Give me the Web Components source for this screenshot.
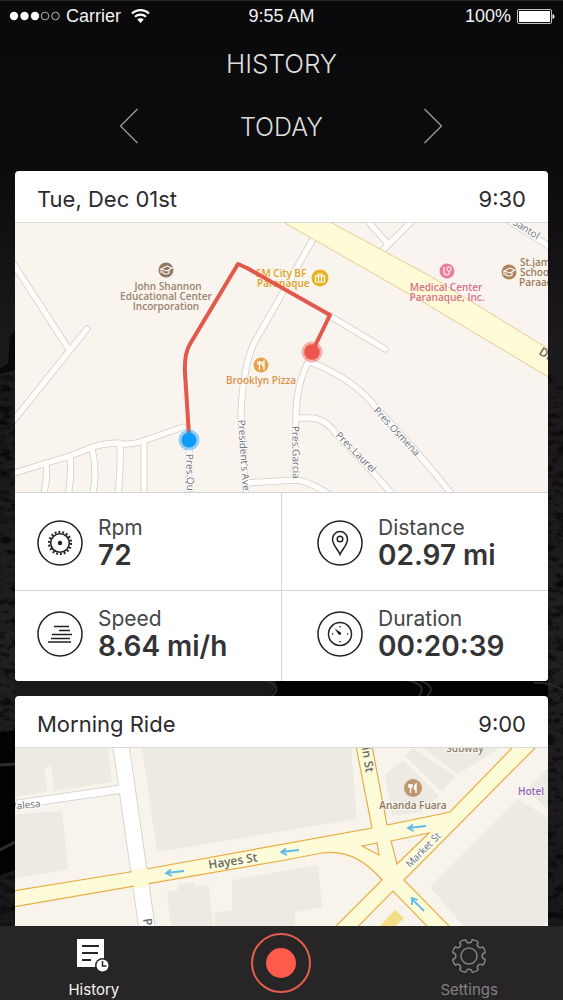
<!DOCTYPE html>
<html lang="en">
<head>
<meta charset="utf-8">
<meta name="viewport" content="width=device-width, initial-scale=1">
<title>History</title>
<style>
html, body{
    height: 100%;
    margin: 0;
}

body{
    background: #0b0a0c;
    font-family: Inter, "Liberation Sans", sans-serif;
    color: #2b2b2d;
}
</style>
</head>
<body>
<ride-app>
    <status-bar slot="top" data-carrier="Carrier" data-time="9:55 AM" data-battery="100%"></status-bar>
    <day-picker slot="top" data-title="History" data-day="Today"></day-picker>

    <ride-card data-name="Tue, Dec 01st" data-time="9:30">
        <paranaque-map slot="map"></paranaque-map>
        <ride-stat data-label="Rpm" data-value="72" data-icon="gear"></ride-stat>
        <ride-stat data-label="Distance" data-value="02.97 mi" data-icon="pin"></ride-stat>
        <ride-stat data-label="Speed" data-value="8.64 mi/h" data-icon="speed"></ride-stat>
        <ride-stat data-label="Duration" data-value="00:20:39" data-icon="clock"></ride-stat>
    </ride-card>

    <ride-card data-name="Morning Ride" data-time="9:00">
        <hayes-map slot="map"></hayes-map>
    </ride-card>

    <tab-bar slot="bottom"></tab-bar>
</ride-app>

<script>
function makeTemplate(html){
    const template = document.createElement("template");
    template.innerHTML = html;
    return template;
}

// shared by every element: clones its template into an open shadow root
class RideElement extends HTMLElement{
    constructor(){
        super();
        this.attachShadow({mode: "open"});
        this.shadowRoot.appendChild(this.constructor.template.content.cloneNode(true));
    }

    connectedCallback(){
        this.render();
    }

    find(selector){
        return this.shadowRoot.querySelector(selector);
    }

    render(){}
}

/* ---------- page ---------- */
class RideApp extends RideElement{
    static template = makeTemplate(`
<style>
:host{
    display: flex;
    flex-direction: column;
    height: 100vh;
    position: relative;
    overflow: hidden;
    background: #0b0a0c;
}

.backdrop{
    position: absolute;
    inset: 0;
    width: 100%;
    height: 100%;
}

header, main, footer{
    position: relative;
}

main{
    flex: 1;
    min-height: 0;
    overflow-y: auto;
    scrollbar-width: none;
    display: flex;
    flex-direction: column;
    gap: 15px;
    padding: 0 15px;
}

::slotted(ride-card){
    flex: none;
}
</style>

<svg class="backdrop" viewBox="0 0 563 1000" preserveAspectRatio="xMidYMid slice" aria-hidden="true">
    <defs>
        <linearGradient id="sky" x1="0" y1="0" x2="0" y2="1">
            <stop offset="0" stop-color="#0a090b"/>
            <stop offset=".17" stop-color="#0c0b0d"/>
            <stop offset=".36" stop-color="#1b1b1e"/>
            <stop offset=".45" stop-color="#1a1a1c"/>
            <stop offset=".65" stop-color="#202022"/>
            <stop offset="1" stop-color="#161617"/>
        </linearGradient>
        <filter id="rock" x="0" y="0" width="1" height="1">
            <feTurbulence type="fractalNoise" baseFrequency=".09 .16" numOctaves="4" seed="6"/>
            <feColorMatrix values="0 0 0 0 0  0 0 0 0 0  0 0 0 0 0  4 0 0 0 -1.9"/>
        </filter>
    </defs>
    <rect width="563" height="1000" fill="url(#sky)"/>
    <path d="M0 368l8-4 2-28 5-6v40L0 374z" fill="#09090a"/>
    <rect y="375" width="563" height="625" filter="url(#rock)" opacity=".6"/>
    <path d="M0 733l15-3V670h533v40l-15 10 15 10v100l-533 40-15 5z" fill="#020203"/>
    <path d="M15 676h258q8 10-6 24H15z" fill="#19191b"/>
    <path d="M0 765l15-1M0 850l15-8" stroke="#2c2c2e" stroke-width="3"/>
    <path d="M264 680q20 6 8 16M405 680q24 4 14 16M418 680q20 6 9 16M534 683q12-2 29 7" fill="none" stroke="#29292c" stroke-width="2"/>
</svg>
<header><slot name="top"></slot></header>
<main><slot></slot></main>
<footer><slot name="bottom"></slot></footer>
`);
}

/* ---------- phone status ---------- */
class StatusBar extends RideElement{
    static template = makeTemplate(`
<style>
:host{
    display: grid;
    grid-template-columns: 1fr auto 1fr;
    align-items: center;
    height: 31px;
    padding: 0 8px;
    border-top: 1px solid #29292b;
    box-sizing: border-box;
    font: 18px/20px "Liberation Sans", Arial, sans-serif;
    color: #f2f2f3;
}

div{
    display: flex;
    align-items: center;
    gap: 6px;
}

.right{
    justify-content: flex-end;
}

.carrier{
    margin-right: 4px;
}

svg{
    display: block;
}
</style>

<div>
    <svg width="52" height="10" viewBox="0 0 52 10" aria-hidden="true">
        <g fill="#fff"><circle cx="6" cy="5" r="4.2"/><circle cx="16.5" cy="5" r="4.2"/><circle cx="27" cy="5" r="4.2"/></g>
        <g fill="none" stroke="#b5b5b7"><circle cx="37" cy="5" r="3.8"/><circle cx="47.5" cy="5" r="3.8"/></g>
    </svg>
    <span class="carrier"></span>
    <svg width="19" height="14" viewBox="0 0 19 14" aria-hidden="true">
        <path d="M1 4.6a12.2 12.2 0 0 1 17 0M4 7.8a8 8 0 0 1 11 0" fill="none" stroke="#fff" stroke-width="2.1"/>
        <path d="M9.5 14L6.3 10.6a4.6 4.6 0 0 1 6.4 0z" fill="#fff"/>
    </svg>
</div>
<span class="time"></span>
<div class="right">
    <span class="battery"></span>
    <svg width="38" height="15" viewBox="0 0 38 15" aria-hidden="true">
        <rect x=".5" y=".5" width="34" height="14" rx="1.5" fill="none" stroke="#c4c4c6"/>
        <rect x="2" y="2" width="31" height="11" fill="#fff"/>
        <path d="M35.5 5q2 .5 2 2.5t-2 2.5z" fill="#fff"/>
    </svg>
</div>
`);

    render(){
        this.find(".carrier").textContent = this.dataset.carrier;
        this.find(".time").textContent = this.dataset.time;
        this.find(".battery").textContent = this.dataset.battery;
    }
}

/* ---------- title and day switch ---------- */
class DayPicker extends RideElement{
    static template = makeTemplate(`
<style>
:host{
    display: block;
    padding: 17px 0 25px;
    color: #dededf;
    text-align: center;
    text-transform: uppercase;
}

h1, h2{
    margin: 0;
    font-weight: 300;
    line-height: 32px;
}

h1{
    font-size: 26px;
}

h2{
    font-size: 25px;
    padding-top: 2px;
}

div{
    display: grid;
    grid-template-columns: 1fr 1fr 1fr;
    align-items: center;
    width: 81%;
    margin: 26px auto 0;
}

button{
    display: block;
    justify-self: center;
    padding: 2px 12px;
    border: 0;
    background: none;
    color: #9b9b9d;
}

svg{
    display: block;
}
</style>

<h1></h1>
<div>
    <button type="button" aria-label="Previous day">
        <svg width="20" height="36" viewBox="0 0 20 36" fill="none" stroke="currentColor" stroke-width="1.3"><path d="M18.5 1L1.5 18l17 17"/></svg>
    </button>
    <h2></h2>
    <button type="button" aria-label="Next day">
        <svg width="20" height="36" viewBox="0 0 20 36" fill="none" stroke="currentColor" stroke-width="1.3"><path d="M1.5 1l17 17-17 17"/></svg>
    </button>
</div>
`);

    render(){
        this.find("h1").textContent = this.dataset.title;
        this.find("h2").textContent = this.dataset.day;
    }
}

/* ---------- ride card ---------- */
class RideCard extends RideElement{
    static template = makeTemplate(`
<style>
:host{
    display: block;
    overflow: hidden;
    border-radius: 4px;
    background: #fff;
}

header{
    display: flex;
    justify-content: space-between;
    align-items: center;
    height: 51px;
    padding: 4px 22px 0;
    box-sizing: border-box;
    font-size: 22px;
    line-height: 28px;
}

h3{
    margin: 0;
    font: inherit;
}

.map{
    border-top: 1px solid #dcdad8;
}

.stats{
    display: grid;
    grid-template-columns: 1fr 1fr;
    gap: 1px;
    background: #d6d4d6;
}

.stats:not(.empty){
    border-top: 1px solid #d6d4d6;
}

::slotted(ride-stat){
    padding: 16px 0 20px 22px;
}

::slotted(ride-stat:nth-of-type(-n+2)){
    padding-top: 23px;
}

::slotted(ride-stat:nth-of-type(even)){
    padding-left: 35px;
}
</style>

<header><h3></h3><time></time></header>
<div class="map"><slot name="map"></slot></div>
<div class="stats"><slot></slot></div>
`);

    render(){
        this.find("h3").textContent = this.dataset.name;
        this.find("time").textContent = this.dataset.time;
        this.find(".stats").classList.toggle("empty", !this.querySelector("ride-stat"));
    }
}

/* ---------- one number of a ride ---------- */
const statIcons = {
    gear: `
        <circle cx="23" cy="23" r="9.3" stroke-width="1.6"/>
        <circle cx="23" cy="23" r="11" stroke-width="2.2" stroke-dasharray="1.9 1.94"/>
        <circle cx="23" cy="23" r="2.2" fill="currentColor" stroke="none"/>`,
    pin: `
        <path d="M23 34.5c-2-5-7.500-9.500-7.500-15.500a7.500 7.500 0 0 1 15 0c0 6-5.500 10.500-7.500 15.500z"/>
        <circle cx="23" cy="19" r="2.8"/>`,
    speed: `
        <path d="M17 15.500h15M22 19.500h11M15 23.500h20M14 27.500h19M11 31h23"/>`,
    clock: `
        <circle cx="23" cy="23" r="11.5"/>
        <path d="M23 15v1.200M23 30v1.200M15 23h1.200M30 23h1.200"/>
        <path d="M17.500 17.500l6.500 4a1.800 1.800 0 0 1-2 2.500z" fill="currentColor" stroke="none"/>`
};

class RideStat extends RideElement{
    static template = makeTemplate(`
<style>
:host{
    display: flex;
    align-items: center;
    gap: 15px;
    background: #fff;
}

svg{
    flex: none;
    color: #222224;
}

dl{
    margin: 0;
}

dt{
    font-size: 21px;
    line-height: 24px;
    color: #464648;
}

dd{
    margin: 0;
    font-size: 28px;
    font-weight: 600;
    line-height: 30px;
    color: #343436;
}
</style>

<svg width="46" height="46" viewBox="0 0 46 46" fill="none" stroke="currentColor" stroke-width="1.5" aria-hidden="true">
    <circle cx="23" cy="23" r="22"/>
    <g></g>
</svg>
<dl><dt></dt><dd></dd></dl>
`);

    render(){
        this.find("g").innerHTML = statIcons[this.dataset.icon];
        this.find("dt").textContent = this.dataset.label;
        this.find("dd").textContent = this.dataset.value;
    }
}

/* ---------- maps ---------- */
const mapStyle = `
<style>
:host{
    display: block;
}

svg{
    display: block;
    width: 100%;
    height: auto;
}

text{
    font-family: "Open Sans", "Noto Sans", sans-serif;
    font-size: 10px;
    font-weight: 600;
}

.halo{
    stroke: #f9f5ee;
    stroke-width: 2px;
    paint-order: stroke;
}

.street{
    font-weight: 400;
    fill: #6c6c6f;
    stroke: #fff;
    stroke-width: 2px;
    paint-order: stroke;
}

.road{
    font-size: 12px;
    fill: #68686a;
}

.mid{
    text-anchor: middle;
}
</style>`;

class ParanaqueMap extends RideElement{
    static template = makeTemplate(`${mapStyle}
<svg viewBox="0 0 533 269" role="img" aria-label="Route map">
    <defs>
        <g id="streets" fill="none" stroke-linecap="round" stroke-linejoin="round">
            <path d="M-4 37L53 125M-2 198L72 106"/>
            <path d="M-4 251L32 240L55 233L78 224Q90 220 105 220Q112 223 128 218L168 204"/>
            <path d="M31 240Q33 256 28 274M55 234Q57 250 53 274M77 226Q83 250 77 274M105 222Q106 245 103 274M129 219V274"/>
            <path d="M174 217V274"/>
            <path d="M298 16L267 71L238 122Q227 150 226 193L231 274"/>
            <path d="M315 93L370 126"/>
            <path d="M295 136Q281 160 281 195L280 257"/>
            <path d="M295 139Q340 156 362 186Q400 225 439 274"/>
            <path d="M282 195H298Q312 197 322 212Q350 240 380 274"/>
            <path d="M231 260L280 257Q294 258 315 272"/>
            <path d="M351 -4L372 20M399 -4L367 28M491 -4L537 25"/>
        </g>
    </defs>
    <rect width="533" height="269" fill="#f9f5ee"/>
    <path d="M430 -2H535V128L415 53L340 10zM300 160L400 100L535 170V271H360z" fill="#faf4f0" opacity=".7"/>
    <use href="#streets" stroke="#d3cec8" stroke-width="7"/>
    <use href="#streets" stroke="#fffefd" stroke-width="5.4"/>
    <path d="M268 -1H315L415 53L535 127V155L408 79L298 16z" fill="#fefbd6" stroke="#edc990"/>

    <g fill="#9a8270" class="halo mid">
        <text x="153" y="67">John Shannon</text>
        <text x="151" y="77">Educational Center</text>
        <text x="151" y="87">Incorporation</text>
    </g>
    <g fill="#dfa21f" class="halo">
        <text x="241" y="54">SM City BF</text>
        <text x="242" y="64">Paranaque</text>
    </g>
    <text x="246" y="161" class="halo mid" fill="#dc8f4a">Brooklyn Pizza</text>
    <g fill="#d9708d" class="mid">
        <text x="431" y="68">Medical Center</text>
        <text x="432" y="78">Paranaque, Inc.</text>
    </g>
    <g fill="#9a7a60" class="halo">
        <text x="505" y="43">St.james</text>
        <text x="505" y="53">School</text>
        <text x="504" y="63">Paraaque</text>
    </g>

    <!-- place badges -->
    <g transform="translate(151 47)">
        <circle r="7.5" fill="#927961"/>
        <path d="M-5 -1L1 -4l5 2-5 3zM-3 1v2q3 2 6 0V0M-5 -1v4" fill="none" stroke="#fff" stroke-width="1.1"/>
    </g>
    <g transform="translate(494 49)">
        <circle r="7.5" fill="#b08459"/>
        <path d="M-5 -1L1 -4l5 2-5 3zM-3 1v2q3 2 6 0V0M-5 -1v4" fill="none" stroke="#fff" stroke-width="1.1"/>
    </g>
    <g transform="translate(305 55)">
        <circle r="8.5" fill="#e5b221"/>
        <path d="M-4.5 -2h9v6h-9zM-2 -2v-2h4v2M-1.5 -2v6M1.5 -2v6" fill="none" stroke="#fff" stroke-width="1.2"/>
    </g>
    <g transform="translate(246 142)">
        <circle r="7.5" fill="#e8a34a"/>
        <path d="M-3 -4v3h3v-3M-1.5 -4v9M3 5v-9q-2 2-1.5 5H3" fill="none" stroke="#fff" stroke-width="1.2"/>
    </g>
    <g transform="translate(432 48)">
        <circle r="7.5" fill="#ea7f9b"/>
        <circle cx="2" cy="-2" r="2.2" fill="none" stroke="#fff"/>
        <path d="M-3 -4v4q0 4 3 4t2-4" fill="none" stroke="#fff" stroke-width="1.1"/>
    </g>

    <!-- street names -->
    <text class="street" transform="translate(171 231) rotate(88)">Pres.Quirino</text>
    <text class="street" transform="translate(223 197) rotate(86)">President's Ave.</text>
    <text class="street" transform="translate(277 203) rotate(89)">Pres.Garcia</text>
    <text class="street" transform="translate(358 188) rotate(47)">Pres.Osmena</text>
    <text class="street" transform="translate(320 213) rotate(45)">Pres.Laurel</text>
    <text class="street" transform="translate(497 1) rotate(32)">Santol</text>
    <text class="road" transform="translate(523 131) rotate(31)">Dr. A. Santos Ave</text>

    <!-- the ride -->
    <path d="M174 212L170 150Q169 131 175 121L223 41L232 45L315 92L297 129" fill="none" stroke="#e4574c" stroke-width="4" stroke-linejoin="round"/>
    <circle cx="174" cy="217" r="10.5" fill="#1c9df5" opacity=".45"/>
    <circle cx="174" cy="217" r="7.5" fill="#109cfa"/>
    <circle cx="297" cy="129" r="10.5" fill="#ef5b52" opacity=".45"/>
    <circle cx="297" cy="129" r="7.8" fill="#ee554b"/>
</svg>
`);
}

class HayesMap extends RideElement{
    static template = makeTemplate(`${mapStyle}
<svg viewBox="0 0 533 269" role="img" aria-label="Route map">
    <rect width="533" height="269" fill="#f8f4ec"/>
    <path d="M0 62L103 46L117 124L0 143zM420 80L505 0H533V20L415 139z" fill="#f9f3ee"/>
    <!-- blocks -->
    <g fill="#edeae3">
        <path d="M0 0H93L97 34L39 43L36 18L30 19L32 44L0 49z"/>
        <path d="M0 66L47 63L53 122L0 130z"/>
        <path d="M127 0H336L342 71L142 104z"/>
        <path d="M152 144L163 142V137L178 134L180 139L194 137L198 179V269H166z"/>
        <path d="M217 132L303 117L307 159L280 164V269H200V164L217 163z"/>
        <path d="M370 27L388 12L424 48L405 64L377 68z"/>
        <path d="M390 8L398 0L440 28L427 44zM408 0H485L443 26z"/>
        <path d="M415 139L503 51L533 70V172Q528 180 515 180H450z"/>
        <path d="M512 42L533 20V62z"/>
    </g>
    <g fill="none">
        <path d="M-3 57L107 41" stroke="#cfcbc6" stroke-width="9"/>
        <path d="M106 -2L125 131L145 271" stroke="#cfcbc6" stroke-width="17"/>
        <path d="M-3 57L107 41" stroke="#fff" stroke-width="7.5"/>
        <path d="M106 -2L125 131L145 271" stroke="#fff" stroke-width="15.5"/>
    </g>
    <path d="M364 179L380 162L389 170L379 179z" fill="#f4de83"/>
    <path fill="#fefcd8" stroke="#e6ad45" stroke-width="1.2" fill-rule="evenodd" d="M-2 143L115 124L357 80L341 -2H357L372 77L435 64L499 -2H522L389 132L525 271H502L378 143L252 271H228L367 132Q340 100 307 105L265 113L-2 159z
        M347 98L362 95L364 107zM376 93L414 85L382 116z"/>
    <path d="M117 123L132 120L134 138L119 141z" fill="#fefcd8"/>

    <!-- one-way arrows -->
    <g fill="none" stroke="#63b9ee" stroke-width="1.8">
        <path d="M169 123L151 125M156 121.5L151 125L157 128"/>
        <path d="M284 102L266 104M271 100.5L266 104L272 107"/>
        <path d="M411 78L393 80M398 76.5L393 80L399 83"/>
        <path d="M409 163L396 150M397 157V150L403 152"/>
    </g>

    <text class="street" transform="translate(-4 62) rotate(-6)">Valesa</text>
    <text class="road" transform="translate(194 121) rotate(-9)">Hayes St</text>
    <text class="road" transform="translate(344 -18) rotate(81)">Main St</text>
    <text class="street" transform="translate(395 120) rotate(-45)">Market St</text>
    <text class="road" transform="translate(128 171) rotate(81)">Polk St</text>
    <g class="halo mid">
        <text x="398" y="61" fill="#8f7560">Ananda Fuara</text>
        <text x="450" y="4" fill="#8f8074">Subway</text>
        <text x="516" y="47" fill="#9463b8">Hotel</text>
    </g>
    <g transform="translate(398 40)">
        <circle r="9" fill="#bf9670"/>
        <path d="M-4 -4v3h3v-3M-2.5 -4v9M3 5v-9q-2 2-1.5 5H3" fill="none" stroke="#fff" stroke-width="1.4"/>
    </g>
</svg>
`);
}

/* ---------- bottom tabs ---------- */
class TabBar extends RideElement{
    static template = makeTemplate(`
<style>
:host{
    display: block;
    background: #272526;
}

nav{
    display: grid;
    grid-template-columns: 1fr 1fr 1fr;
    justify-items: center;
    height: 74px;
}

a{
    display: flex;
    flex-direction: column;
    align-items: center;
    gap: 6px;
    padding-top: 12px;
    font-size: 15px;
    line-height: 20px;
    color: #838183;
    text-decoration: none;
}

a.active{
    color: #f4f4f4;
}

button{
    align-self: center;
    padding: 0;
    border: 0;
    background: none;
}

svg{
    display: block;
}
</style>

<nav>
    <a href="#history" class="active" aria-current="page">
        <svg width="36" height="36" viewBox="0 0 36 36" aria-hidden="true">
            <path d="M1 1h27v28H1z" fill="#fff"/>
            <path d="M6 8h17M6 15h16M6 22h9" stroke="#272526" stroke-width="2"/>
            <circle cx="26.5" cy="27.5" r="7.5" fill="#272526"/>
            <circle cx="26.5" cy="27.5" r="6" fill="#fff"/>
            <path d="M26.5 23v5h4" fill="none" stroke="#272526" stroke-width="1.5"/>
        </svg>
        <span>History</span>
    </a>
    <button type="button" aria-label="Record ride">
        <svg width="62" height="62" viewBox="0 0 62 62">
            <circle cx="31" cy="31" r="29" fill="none" stroke="#e45c4f" stroke-width="2"/>
            <circle cx="31" cy="31" r="15" fill="#fd5c4d"/>
        </svg>
    </button>
    <a href="#settings">
        <svg width="36" height="36" viewBox="0 0 36 36" fill="none" stroke="currentColor" stroke-width="1.5" aria-hidden="true">
            <circle cx="18" cy="18" r="8"/>
            <path class="cog" stroke-linejoin="round"/>
        </svg>
        <span>Settings</span>
    </a>
</nav>
`);

    render(){
        // eight rounded teeth, with a shallow dip between each two
        let d = "";
        for(let i = 0; i < 8; i++){
            const at = (deg, r) => {
                const a = (i * 45 + deg) * Math.PI / 180;
                return `${(18 + r * Math.cos(a)).toFixed(2)} ${(18 + r * Math.sin(a)).toFixed(2)}`;
            };
            d += `${i ? "L" : "M"}${at(11, 16.5)}Q${at(22.5, 17.6)} ${at(34, 16.5)}Q${at(34, 13.2)} ${at(45, 13.2)}Q${at(56, 13.2)} ${at(56, 16.5)}`;
        }
        this.find(".cog").setAttribute("d", d + "z");
    }
}

customElements.define("ride-app", RideApp);
customElements.define("status-bar", StatusBar);
customElements.define("day-picker", DayPicker);
customElements.define("ride-card", RideCard);
customElements.define("ride-stat", RideStat);
customElements.define("paranaque-map", ParanaqueMap);
customElements.define("hayes-map", HayesMap);
customElements.define("tab-bar", TabBar);
</script>
</body>
</html>
